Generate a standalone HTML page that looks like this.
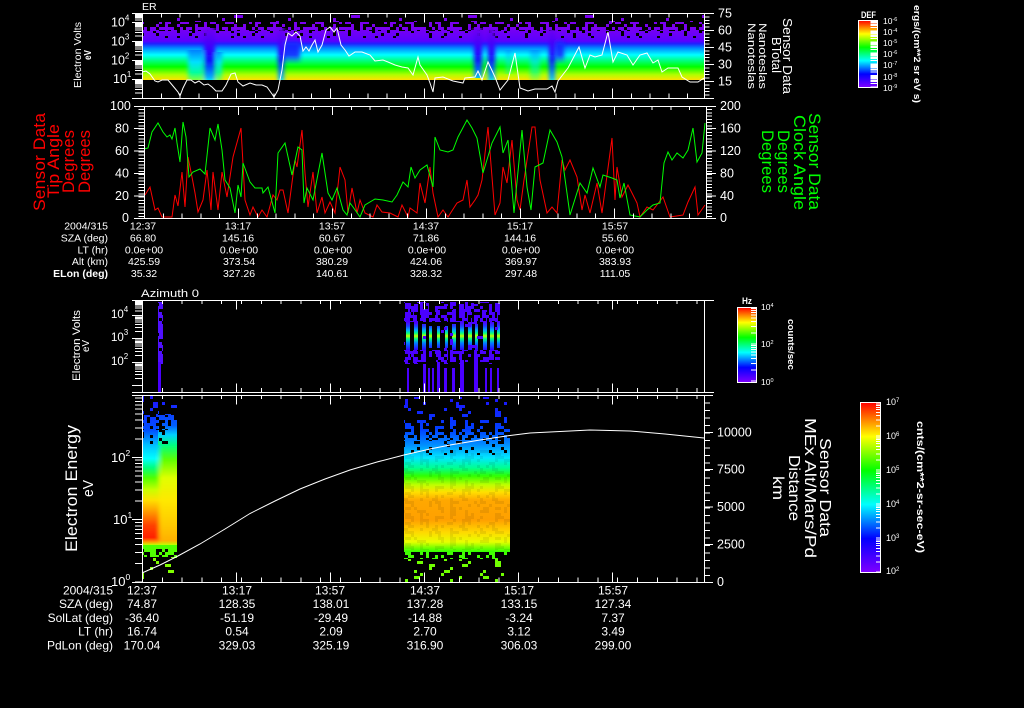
<!DOCTYPE html>
<html><head><meta charset="utf-8"><title>Sensor Data</title>
<style>
html,body{margin:0;padding:0;background:#000;width:1024px;height:708px;overflow:hidden}
svg{display:block;font-family:"Liberation Sans",sans-serif}
text{fill:#fff}
.c{shape-rendering:crispEdges}
</style></head><body>
<svg width="1024" height="708" viewBox="0 0 1024 708" xmlns="http://www.w3.org/2000/svg">
<defs>
<linearGradient id="rb" x1="0" y1="0" x2="0" y2="1">
<stop offset="0" stop-color="#f00"/><stop offset=".1" stop-color="#ff8000"/><stop offset=".2" stop-color="#ff0"/><stop offset=".4" stop-color="#0f0"/><stop offset=".6" stop-color="#0ff"/><stop offset=".8" stop-color="#00f"/><stop offset="1" stop-color="#8000ff"/>
</linearGradient>
<linearGradient id="g1" gradientUnits="userSpaceOnUse" x1="0" y1="14" x2="0" y2="80">
<stop offset="0" stop-color="#7a00f0"/><stop offset=".21" stop-color="#7a00f0"/><stop offset=".41" stop-color="#5a00ff"/><stop offset=".45" stop-color="#2020ff"/><stop offset=".515" stop-color="#0088ff"/><stop offset=".62" stop-color="#0ff"/><stop offset=".7" stop-color="#00ff88"/><stop offset=".8" stop-color="#0f0"/><stop offset=".92" stop-color="#b0ff00"/><stop offset="1" stop-color="#ffe000"/>
</linearGradient>
<linearGradient id="dipA" gradientUnits="userSpaceOnUse" x1="0" y1="28" x2="0" y2="80">
<stop offset="0" stop-color="#7000f0"/><stop offset=".45" stop-color="#3000ff"/><stop offset=".62" stop-color="#1010ff"/><stop offset=".8" stop-color="#0060ff"/><stop offset=".95" stop-color="#00b0ff"/><stop offset="1" stop-color="#00e0ff"/>
</linearGradient>
<linearGradient id="dipB" gradientUnits="userSpaceOnUse" x1="0" y1="50" x2="0" y2="80">
<stop offset="0" stop-color="#0080ff"/><stop offset=".4" stop-color="#00e0ff"/><stop offset=".75" stop-color="#00ffa0"/><stop offset="1" stop-color="#80ff40"/>
</linearGradient>
<linearGradient id="dipC" gradientUnits="userSpaceOnUse" x1="0" y1="38" x2="0" y2="64">
<stop offset="0" stop-color="#1828ff" stop-opacity="0"/><stop offset=".3" stop-color="#1828ff"/><stop offset=".65" stop-color="#1828ff" stop-opacity=".9"/><stop offset="1" stop-color="#1828ff" stop-opacity="0"/>
</linearGradient>
<linearGradient id="g3" gradientUnits="userSpaceOnUse" x1="0" y1="322" x2="0" y2="350">
<stop offset="0" stop-color="#5000ff"/><stop offset=".15" stop-color="#2040ff"/><stop offset=".3" stop-color="#00b0ff"/><stop offset=".4" stop-color="#00ff80"/><stop offset=".5" stop-color="#c0ff00"/><stop offset=".6" stop-color="#00ff80"/><stop offset=".75" stop-color="#0080ff"/><stop offset="1" stop-color="#3000ff"/>
</linearGradient>
<linearGradient id="g4" gradientUnits="userSpaceOnUse" x1="0" y1="395" x2="0" y2="552">
<stop offset="0" stop-color="#2010ff"/><stop offset=".22" stop-color="#0040ff"/><stop offset=".32" stop-color="#0090ff"/><stop offset=".4" stop-color="#00e8ff"/><stop offset=".465" stop-color="#00ff90"/><stop offset=".516" stop-color="#30ff00"/><stop offset=".573" stop-color="#c0ff00"/><stop offset=".618" stop-color="#ffe000"/><stop offset=".67" stop-color="#ffa800"/><stop offset=".796" stop-color="#ffa000"/><stop offset=".873" stop-color="#ffd800"/><stop offset=".936" stop-color="#e8ff00"/><stop offset=".975" stop-color="#70ff00"/><stop offset="1" stop-color="#30ff00"/>
</linearGradient>
<linearGradient id="g5" gradientUnits="userSpaceOnUse" x1="0" y1="396" x2="0" y2="545">
<stop offset="0" stop-color="#2010ff"/><stop offset=".23" stop-color="#0050ff"/><stop offset=".33" stop-color="#00c0ff"/><stop offset=".42" stop-color="#0ff"/><stop offset=".48" stop-color="#00ff80"/><stop offset=".55" stop-color="#50ff00"/><stop offset=".63" stop-color="#c8ff00"/><stop offset=".7" stop-color="#ffe000"/><stop offset=".77" stop-color="#ffa000"/><stop offset=".87" stop-color="#ff4000"/><stop offset=".95" stop-color="#ff2000"/><stop offset=".98" stop-color="#ffa000"/><stop offset="1" stop-color="#c0ff00"/>
</linearGradient>
<linearGradient id="g6" gradientUnits="userSpaceOnUse" x1="0" y1="396" x2="0" y2="545">
<stop offset="0" stop-color="#2010ff"/><stop offset=".2" stop-color="#0060ff"/><stop offset=".26" stop-color="#00d0ff"/><stop offset=".33" stop-color="#00ff80"/><stop offset=".43" stop-color="#60ff00"/><stop offset=".55" stop-color="#e0ff00"/><stop offset=".7" stop-color="#ffe800"/><stop offset=".87" stop-color="#ffc800"/><stop offset=".97" stop-color="#ffb000"/><stop offset="1" stop-color="#c0ff00"/>
</linearGradient>
<filter id="bl" filterUnits="userSpaceOnUse" x="130" y="20" width="590" height="70"><feGaussianBlur stdDeviation="2.2 0"/></filter>
<filter id="bl2" filterUnits="userSpaceOnUse" x="130" y="440" width="60" height="110"><feGaussianBlur stdDeviation="2 0"/></filter>
<clipPath id="cl4"><rect x="142" y="445" width="35" height="100"/></clipPath>
<clipPath id="cl1"><rect x="142" y="27" width="562" height="53"/></clipPath>
<pattern id="p6" patternUnits="userSpaceOnUse" width="1024" height="30">
<g stroke="#fff" stroke-width="3" class="c">
<path d="M0 1.5H1024" stroke-dasharray="3 57 6 81"/><path d="M0 4.5H1024" stroke-dasharray="3 78 3 66"/><path d="M0 7.5H1024" stroke-dasharray="6 99 3 51"/><path d="M0 10.5H1024" stroke-dasharray="3 72"/><path d="M0 13.5H1024" stroke-dasharray="3 45 3 90 3 57"/><path d="M0 16.5H1024" stroke-dasharray="9 108"/><path d="M0 19.5H1024" stroke-dasharray="3 63 3 42"/><path d="M0 22.5H1024" stroke-dasharray="3 54 6 75"/><path d="M0 25.5H1024" stroke-dasharray="6 87"/><path d="M0 28.5H1024" stroke-dasharray="3 111 3 48"/>
</g></pattern>
<pattern id="p15" patternUnits="userSpaceOnUse" width="1024" height="30">
<g stroke="#fff" stroke-width="3" class="c">
<path d="M0 1.5H1024" stroke-dasharray="3 27 6 33"/><path d="M0 4.5H1024" stroke-dasharray="3 18 3 36"/><path d="M0 7.5H1024" stroke-dasharray="6 39 3 21"/><path d="M0 10.5H1024" stroke-dasharray="3 42"/><path d="M0 13.5H1024" stroke-dasharray="3 15 3 30 3 27"/><path d="M0 16.5H1024" stroke-dasharray="9 48"/><path d="M0 19.5H1024" stroke-dasharray="3 33 3 12"/><path d="M0 22.5H1024" stroke-dasharray="3 24 6 45"/><path d="M0 25.5H1024" stroke-dasharray="6 27"/><path d="M0 28.5H1024" stroke-dasharray="3 51 3 18"/>
</g></pattern>
<pattern id="p35" patternUnits="userSpaceOnUse" width="1024" height="30">
<g stroke="#fff" stroke-width="3" class="c">
<path d="M0 1.5H1024" stroke-dasharray="3 6 6 9 3 12 9 15"/><path d="M0 4.5H1024" stroke-dasharray="6 9 3 3 3 21"/><path d="M0 7.5H1024" stroke-dasharray="3 12 9 6"/><path d="M0 10.5H1024" stroke-dasharray="9 6 3 15 3 6"/><path d="M0 13.5H1024" stroke-dasharray="3 3 3 18 6 9"/><path d="M0 16.5H1024" stroke-dasharray="6 12 3 6 3 3 3 15"/><path d="M0 19.5H1024" stroke-dasharray="3 9 6 12"/><path d="M0 22.5H1024" stroke-dasharray="9 15 3 3 6 9"/><path d="M0 25.5H1024" stroke-dasharray="3 6 3 9 3 15"/><path d="M0 28.5H1024" stroke-dasharray="6 3 3 21 6 6"/>
</g></pattern>
<pattern id="p60" patternUnits="userSpaceOnUse" width="1024" height="30">
<g stroke="#fff" stroke-width="3" class="c">
<path d="M0 1.5H1024" stroke-dasharray="9 6 3 3 6 3"/><path d="M0 4.5H1024" stroke-dasharray="6 3 12 6"/><path d="M0 7.5H1024" stroke-dasharray="3 3 9 3 6 6 12 3"/><path d="M0 10.5H1024" stroke-dasharray="12 6 3 3"/><path d="M0 13.5H1024" stroke-dasharray="6 3 3 3 9 6"/><path d="M0 16.5H1024" stroke-dasharray="9 3 6 6 3 3"/><path d="M0 19.5H1024" stroke-dasharray="3 6 12 3 6 3"/><path d="M0 22.5H1024" stroke-dasharray="12 3 3 6"/><path d="M0 25.5H1024" stroke-dasharray="6 6 9 3"/><path d="M0 28.5H1024" stroke-dasharray="3 3 6 3 15 6"/>
</g></pattern>
<pattern id="p85" patternUnits="userSpaceOnUse" width="1024" height="30">
<g stroke="#fff" stroke-width="3" class="c">
<path d="M0 1.5H1024" stroke-dasharray="21 3 12 3"/><path d="M0 4.5H1024" stroke-dasharray="12 3 30 3"/><path d="M0 7.5H1024" stroke-dasharray="33 3 9 3 15 3"/><path d="M0 10.5H1024" stroke-dasharray="27 6"/><path d="M0 13.5H1024" stroke-dasharray="18 3 24 3"/><path d="M0 16.5H1024" stroke-dasharray="39 3 6 3"/><path d="M0 19.5H1024" stroke-dasharray="15 3 33 3"/><path d="M0 22.5H1024" stroke-dasharray="24 3 9 6"/><path d="M0 25.5H1024" stroke-dasharray="42 3"/><path d="M0 28.5H1024" stroke-dasharray="9 3 27 3"/>
</g></pattern>
<mask id="m6" maskUnits="userSpaceOnUse" x="0" y="0" width="1024" height="708"><rect width="1024" height="708" fill="url(#p6)"/></mask>
<mask id="m15" maskUnits="userSpaceOnUse" x="0" y="0" width="1024" height="708"><rect width="1024" height="708" fill="url(#p15)"/></mask>
<mask id="m35" maskUnits="userSpaceOnUse" x="0" y="0" width="1024" height="708"><rect width="1024" height="708" fill="url(#p35)"/></mask>
<mask id="m60" maskUnits="userSpaceOnUse" x="0" y="0" width="1024" height="708"><rect width="1024" height="708" fill="url(#p60)"/></mask>
<mask id="m85" maskUnits="userSpaceOnUse" x="0" y="0" width="1024" height="708"><rect width="1024" height="708" fill="url(#p85)"/></mask>
<path id="dec" d="M-7 0H0M-7 -30.1H0M-7 -47.7H0M-7 -60.2H0M-7 -69.9H0M-7 -77.8H0M-7 -84.5H0M-7 -90.3H0M-7 -95.4H0" fill="none" stroke="#fff" vector-effect="non-scaling-stroke"/>
</defs>

<rect width="1024" height="708" fill="#000"/>

<!-- PANEL 1 spectrogram -->
<g class="c">
<rect x="142" y="15" width="562" height="7" fill="url(#g1)" mask="url(#m6)"/>
<rect x="142" y="22" width="562" height="5" fill="url(#g1)" mask="url(#m35)"/>
<rect x="142" y="27" width="562" height="4" fill="url(#g1)" mask="url(#m60)"/>
<rect x="142" y="31" width="562" height="7" fill="url(#g1)" mask="url(#m85)"/>
<rect x="142" y="38" width="562" height="42" fill="url(#g1)"/>
</g>
<g clip-path="url(#cl1)">
<g filter="url(#bl)">
<rect x="188" y="50" width="15" height="30" fill="url(#dipB)"/>
<rect x="216" y="52" width="6" height="28" fill="url(#dipB)"/>
<rect x="204" y="28" width="11" height="52" fill="url(#dipA)"/>
<rect x="278" y="28" width="6" height="52" fill="url(#dipA)"/>
<rect x="284" y="38" width="16" height="26" fill="url(#dipC)"/>
<rect x="474" y="28" width="8" height="50" fill="url(#dipA)"/>
<rect x="488" y="28" width="7" height="52" fill="url(#dipA)"/>
<rect x="530" y="50" width="10" height="30" fill="url(#dipB)" opacity=".6"/>
<rect x="549" y="30" width="6" height="50" fill="url(#dipA)"/>
<rect x="556" y="38" width="8" height="26" fill="url(#dipC)"/>
<rect x="506" y="50" width="5" height="24" fill="url(#dipB)" opacity=".5"/>
</g>
</g>

<!-- PANEL 1 white line -->
<polyline fill="none" stroke="#fff" stroke-width="1" points="142,72 146,71 150,74 155,81 158,82 162,80 168,80 173,86 178,92 180,96 183,88 187,80 191,80 195,83 199,81 204,85 208,84 212,87 216,91 222,91 226,85 231,74 235,73 238,82 243,86 250,83 256,85 262,85 267,87 272,94 274,97 278,90 282,70 285,45 288,33 292,36 296,32 300,36 303,51 306,47 309,51 312,45 315,40 318,52 322,45 326,30 330,27 334,32 337,28 341,45 345,50 349,56 355,52 362,52 370,55 375,61 383,60 388,62 395,65 402,67 408,68 413,75 418,57 420,65 427,75 430,83 433,92 435,78 443,77 453,81 463,83 465,78 475,77 478,71 482,80 488,62 495,77 500,90 508,80 515,53 520,88 528,91 535,89 547,89 552,86 555,92 558,81 568,68 579,47 585,68 590,55 595,57 602,55 608,32 613,62 618,52 627,55 633,65 640,55 647,53 653,63 658,60 662,72 668,68 678,68 682,77 690,82 698,82 704,78"/>

<!-- PANEL 1 frame -->
<g class="c" stroke="#fff" fill="none">
<path d="M132 13.5H714M132 98.5H714M142.5 13V98M704.5 13V98"/>
<path d="M142 15.5H704" stroke-width="4" stroke-dasharray="1 17.8"/>
<path d="M142 96H704" stroke-width="5" stroke-dasharray="1 17.8"/>
<path d="M142 18H704" stroke-width="9" stroke-dasharray="1 93"/>
<path d="M142 93.5H704" stroke-width="10" stroke-dasharray="1 93"/>
<path d="M707 13V98" stroke-width="5" stroke-dasharray="1 2.4"/>
<path d="M704 30.5H714M704 47.5H714M704 64.5H714M704 81.5H714"/>
<path d="M132 22.5H142M132 41.5H142M132 60.5H142M132 79.5H142"/>
<use href="#dec" transform="translate(142,22.5) scale(1,.09)"/>
<use href="#dec" transform="translate(142,41.5) scale(1,.19)"/>
<use href="#dec" transform="translate(142,60.5) scale(1,.19)"/>
<use href="#dec" transform="translate(142,79.5) scale(1,.19)"/>
<use href="#dec" transform="translate(142,98.5) scale(1,.19)"/>
</g>
<text x="142" y="10" font-size="10.5">ER</text>
<g font-size="12.5">
<text x="111" y="26.5">10<tspan dy="-6" font-size="8">4</tspan></text>
<text x="111" y="45.5">10<tspan dy="-6" font-size="8">3</tspan></text>
<text x="111" y="64.5">10<tspan dy="-6" font-size="8">2</tspan></text>
<text x="113" y="83">10<tspan dy="-6" font-size="8">1</tspan></text>
</g>
<g font-size="12.5">
<text x="718" y="17.5">75</text><text x="718" y="34.5">60</text><text x="718" y="51.5">45</text><text x="718" y="68.5">30</text><text x="718" y="85.5">15</text>
</g>
<text transform="translate(81,88) rotate(-90)" font-size="10.5" textLength="66" lengthAdjust="spacingAndGlyphs">Electron Volts</text>
<text transform="translate(91,60) rotate(-90)" font-size="10" font-weight="bold" textLength="10" lengthAdjust="spacingAndGlyphs">eV</text>
<text transform="translate(783,18) rotate(90)" font-size="13" textLength="76" lengthAdjust="spacingAndGlyphs">Sensor Data</text>
<text transform="translate(772,37) rotate(90)" font-size="13" textLength="36" lengthAdjust="spacingAndGlyphs">BTotal</text>
<text transform="translate(759,23) rotate(90)" font-size="11" textLength="66" lengthAdjust="spacingAndGlyphs">Nanoteslas</text>
<text transform="translate(748,23) rotate(90)" font-size="11" textLength="66" lengthAdjust="spacingAndGlyphs">Nanoteslas</text>

<!-- Colorbar 1 -->
<rect x="858.5" y="20.5" width="19" height="67" fill="url(#rb)" stroke="#fff" class="c"/>
<g class="c">
<use href="#dec" transform="translate(877,31) scale(.9,.111)" stroke-width="1"/>
<use href="#dec" transform="translate(877,42) scale(.9,.111)"/>
<use href="#dec" transform="translate(877,53) scale(.9,.111)"/>
<use href="#dec" transform="translate(877,64) scale(.9,.111)"/>
<use href="#dec" transform="translate(877,75.5) scale(.9,.111)"/>
<use href="#dec" transform="translate(877,87) scale(.9,.111)"/>
</g>
<text x="861" y="18" font-size="9.5" font-weight="bold" textLength="15" lengthAdjust="spacingAndGlyphs">DEF</text>
<g font-size="8.5">
<text x="883" y="24">10<tspan dy="-3" font-size="5.5">-6</tspan></text>
<text x="883" y="35">10<tspan dy="-3" font-size="5.5">-4</tspan></text>
<text x="883" y="46">10<tspan dy="-3" font-size="5.5">-5</tspan></text>
<text x="883" y="57">10<tspan dy="-3" font-size="5.5">-6</tspan></text>
<text x="883" y="68">10<tspan dy="-3" font-size="5.5">-7</tspan></text>
<text x="883" y="80">10<tspan dy="-3" font-size="5.5">-8</tspan></text>
<text x="883" y="91">10<tspan dy="-3" font-size="5.5">-9</tspan></text>
</g>
<text transform="translate(914,5) rotate(90)" font-size="9.5" font-weight="bold" textLength="98" lengthAdjust="spacingAndGlyphs">ergs/(cm**2 sr eV s)</text>

<!-- PANEL 2 lines -->
<polyline fill="none" stroke="#f00" stroke-width="1" points="145,195 150,187 155,210 158,208 162,217 172,217 175,195 178,206 182,172 185,207 188,157 192,177 195,193 198,212 203,200 207,170 211,210 213,172 218,210 222,172 227,197 233,157 241,128 245,200 250,215 253,207 258,217 262,210 267,217 273,195 277,200 280,190 283,190 288,213 295,160 297,167 302,130 305,173 308,207 313,172 317,213 322,197 325,213 330,202 335,213 340,167 345,180 348,213 352,188 357,213 360,200 365,213 373,217 377,205 382,212 390,213 398,217 402,205 408,217 410,208 417,213 420,183 425,203 430,167 433,193 438,217 443,210 448,217 457,203 463,200 467,180 470,207 475,200 478,195 482,180 488,127 492,177 495,215 500,203 503,167 507,183 512,140 517,200 520,210 524,180 532,127 535,127 540,180 547,213 552,207 557,213 562,160 565,170 570,160 577,177 582,210 585,195 590,213 597,183 602,213 612,138 615,200 617,167 622,197 628,185 637,203 640,217 647,207 653,210 663,197 670,217 683,215 688,202 695,187 698,215 705,205"/>
<polyline fill="none" stroke="#0f0" stroke-width="1" points="144,149 148,148 152,132 158,123 163,132 167,137 170,135 172,139 175,128 177,143 180,162 183,122 186,137 189,177 193,172 200,169 205,174 210,128 215,140 218,124 222,150 225,180 230,188 235,213 238,185 241,197 243,163 250,182 255,188 262,188 263,193 268,187 275,213 278,153 285,143 292,175 298,147 302,150 304,203 307,188 313,200 322,153 328,193 332,200 337,188 343,210 347,215 350,203 353,207 360,217 365,205 375,199 383,200 392,202 397,195 403,182 408,187 411,167 415,178 420,170 427,165 433,187 435,137 440,150 448,152 453,150 458,137 467,120 472,128 477,138 483,173 492,143 500,127 503,153 508,140 514,213 522,130 527,187 531,210 535,167 543,163 550,130 557,142 562,157 570,215 580,183 587,193 593,168 600,187 603,175 612,178 617,180 620,198 624,183 630,215 640,217 647,210 653,205 660,203 664,163 668,152 672,160 677,153 683,158 688,150 693,128 697,162 702,153 705,123"/>

<!-- PANEL 2 frame -->
<g class="c" stroke="#fff" fill="none">
<path d="M134 106.5H716M134 218.5H716M144.5 106V218M706.5 106V218"/>
<path d="M144 108H706" stroke-width="4" stroke-dasharray="1 17.8"/>
<path d="M144 216H706" stroke-width="5" stroke-dasharray="1 17.8"/>
<path d="M144 110.5H706" stroke-width="9" stroke-dasharray="1 93"/>
<path d="M144 213.5H706" stroke-width="10" stroke-dasharray="1 93"/>
<path d="M141.5 106V218" stroke-width="6" stroke-dasharray="1 2.24"/>
<path d="M709 106V218" stroke-width="6" stroke-dasharray="1 2.24"/>
<path d="M134 128.5H144M134 151H144M134 173.5H144M134 196H144M706 128.5H716M706 151H716M706 173.5H716M706 196H716"/>
</g>
<g font-size="12.5">
<text x="110" y="110">100</text><text x="115" y="132.5">80</text><text x="115" y="155">60</text><text x="115" y="177.5">40</text><text x="115" y="200">20</text><text x="122" y="222">0</text>
<text x="720" y="110">200</text><text x="720" y="132.5">160</text><text x="720" y="155">120</text><text x="720" y="177.5">80</text><text x="720" y="200">40</text><text x="720" y="222">0</text>
</g>
<g font-size="17">
<text style="fill:#f00" transform="translate(45,211) rotate(-90)" textLength="98" lengthAdjust="spacingAndGlyphs">Sensor Data</text>
<text style="fill:#f00" transform="translate(59,198) rotate(-90)" textLength="74" lengthAdjust="spacingAndGlyphs">Tip Angle</text>
<text style="fill:#f00" transform="translate(74,193) rotate(-90)" textLength="63" lengthAdjust="spacingAndGlyphs">Degrees</text>
<text style="fill:#f00" transform="translate(90,193) rotate(-90)" textLength="63" lengthAdjust="spacingAndGlyphs">Degrees</text>
<text style="fill:#0f0" transform="translate(809,113) rotate(90)" textLength="97" lengthAdjust="spacingAndGlyphs">Sensor Data</text>
<text style="fill:#0f0" transform="translate(794,115) rotate(90)" textLength="95" lengthAdjust="spacingAndGlyphs">Clock Angle</text>
<text style="fill:#0f0" transform="translate(778,130) rotate(90)" textLength="63" lengthAdjust="spacingAndGlyphs">Degrees</text>
<text style="fill:#0f0" transform="translate(762,130) rotate(90)" textLength="63" lengthAdjust="spacingAndGlyphs">Degrees</text>
</g>

<!-- Table 1 -->
<g font-size="10.5" text-anchor="end">
<text x="108" y="229.5">2004/315</text><text x="108" y="241.5">SZA (deg)</text><text x="108" y="253.5">LT (hr)</text><text x="108" y="265">Alt (km)</text><text x="108" y="277" font-weight="bold">ELon (deg)</text>
</g>
<g font-size="10.5" text-anchor="middle">
<text x="143" y="229.5">12:37</text><text x="238" y="229.5">13:17</text><text x="332" y="229.5">13:57</text><text x="426" y="229.5">14:37</text><text x="520" y="229.5">15:17</text><text x="615" y="229.5">15:57</text>
<text x="143" y="241.5">66.80</text><text x="238" y="241.5">145.16</text><text x="332" y="241.5">60.67</text><text x="426" y="241.5">71.86</text><text x="520" y="241.5">144.16</text><text x="615" y="241.5">55.60</text>
<text x="144" y="253.5">0.0e+00</text><text x="239" y="253.5">0.0e+00</text><text x="333" y="253.5">0.0e+00</text><text x="427" y="253.5">0.0e+00</text><text x="521" y="253.5">0.0e+00</text><text x="615" y="253.5">0.0e+00</text>
<text x="144" y="265">425.59</text><text x="239" y="265">373.54</text><text x="332" y="265">380.29</text><text x="426" y="265">424.06</text><text x="521" y="265">369.97</text><text x="615" y="265">383.93</text>
<text x="144" y="277">35.32</text><text x="239" y="277">327.26</text><text x="332" y="277">140.61</text><text x="426" y="277">328.32</text><text x="521" y="277">297.48</text><text x="615" y="277">111.05</text>
</g>

<!-- PANEL 3 -->
<g class="c">
<rect x="158" y="302" width="5" height="62" fill="#5010ff" mask="url(#m85)"/>
<rect x="158" y="362" width="3" height="30" fill="#4a00ff"/>
<rect x="404" y="302" width="96" height="60" fill="#4a00ff" mask="url(#m35)"/>
<g fill="#4a00ff" mask="url(#m60)">
<rect x="405" y="306" width="5" height="16"/><rect x="413" y="304" width="5" height="18"/><rect x="421" y="310" width="5" height="12"/><rect x="428" y="306" width="4" height="16"/><rect x="436" y="310" width="4" height="12"/><rect x="444" y="304" width="4" height="18"/><rect x="452" y="310" width="4" height="12"/><rect x="459" y="304" width="5" height="18"/><rect x="467" y="308" width="5" height="14"/><rect x="474" y="304" width="4" height="18"/><rect x="482" y="310" width="5" height="12"/><rect x="489" y="304" width="5" height="18"/><rect x="497" y="308" width="3" height="14"/>
<rect x="405" y="350" width="5" height="14"/><rect x="413" y="350" width="5" height="14"/><rect x="421" y="350" width="5" height="12"/><rect x="436" y="350" width="4" height="12"/><rect x="444" y="350" width="4" height="14"/><rect x="459" y="350" width="5" height="14"/><rect x="474" y="350" width="4" height="12"/><rect x="489" y="350" width="5" height="14"/>
</g>
<rect x="404" y="322" width="96" height="28" fill="#000"/>
<rect x="406" y="322" width="4" height="28" fill="url(#g3)"/><rect x="414" y="322" width="4" height="28" fill="url(#g3)"/><rect x="422" y="324" width="4" height="26" fill="url(#g3)"/><rect x="429" y="326" width="3" height="22" fill="url(#g3)"/><rect x="437" y="326" width="3" height="22" fill="url(#g3)"/><rect x="445" y="326" width="3" height="22" fill="url(#g3)"/><rect x="452" y="324" width="4" height="26" fill="url(#g3)"/><rect x="460" y="322" width="4" height="28" fill="url(#g3)"/><rect x="468" y="322" width="4" height="28" fill="url(#g3)"/><rect x="475" y="324" width="3" height="26" fill="url(#g3)"/><rect x="483" y="322" width="4" height="28" fill="url(#g3)"/><rect x="490" y="322" width="4" height="28" fill="url(#g3)"/><rect x="497" y="322" width="3" height="26" fill="url(#g3)"/>
<rect x="404" y="322" width="96" height="28" fill="#4a00ff" mask="url(#m6)"/>
<g fill="#4a00ff">
<rect x="407" y="368" width="2" height="24"/><rect x="423" y="364" width="3" height="28"/><rect x="428" y="368" width="2" height="24"/><rect x="432" y="368" width="2" height="24"/><rect x="437" y="362" width="3" height="30"/><rect x="444" y="368" width="3" height="24"/><rect x="452" y="368" width="3" height="24"/><rect x="460" y="360" width="4" height="32"/><rect x="474" y="360" width="4" height="32"/><rect x="485" y="368" width="2" height="24"/><rect x="490" y="368" width="2" height="24"/><rect x="497" y="368" width="2" height="24"/>
</g>
</g>
<g class="c" stroke="#fff" fill="none">
<path d="M132 300.5H714M132 392.5H714M142.5 300V392M704.5 300V392"/>
<path d="M142 302H704" stroke-width="4" stroke-dasharray="1 18.8"/>
<path d="M142 390H704" stroke-width="4" stroke-dasharray="1 18.8"/>
<path d="M142 305H704" stroke-width="9" stroke-dasharray="1 93"/>
<path d="M142 388H704" stroke-width="9" stroke-dasharray="1 93"/>
<path d="M132 315.5H142M132 338.5H142M132 362.5H142M132 385.5H142"/>
<use href="#dec" transform="translate(142,315.5) scale(1,.155)"/>
<use href="#dec" transform="translate(142,338.5) scale(1,.235)"/>
<use href="#dec" transform="translate(142,362.5) scale(1,.235)"/>
<use href="#dec" transform="translate(142,385.5) scale(1,.235)"/>
</g>
<text x="141" y="297" font-size="11" textLength="58" lengthAdjust="spacingAndGlyphs">Azimuth 0</text>
<g font-size="11.5">
<text x="111" y="318">10<tspan dy="-6" font-size="8">4</tspan></text>
<text x="111" y="341">10<tspan dy="-6" font-size="8">3</tspan></text>
<text x="111" y="365">10<tspan dy="-6" font-size="8">2</tspan></text>
</g>
<text transform="translate(80,381) rotate(-90)" font-size="11" textLength="71" lengthAdjust="spacingAndGlyphs">Electron Volts</text>
<text transform="translate(89,352) rotate(-90)" font-size="10" textLength="12" lengthAdjust="spacingAndGlyphs">eV</text>

<!-- Colorbar 3 -->
<rect x="737.5" y="307.5" width="19" height="75" fill="url(#rb)" stroke="#fff" class="c"/>
<g class="c">
<use href="#dec" transform="translate(756,344) scale(.7,.37)"/>
<use href="#dec" transform="translate(756,381) scale(.7,.37)"/>
</g>
<text x="742" y="304" font-size="9.5" font-weight="bold" textLength="10" lengthAdjust="spacingAndGlyphs">Hz</text>
<g font-size="8.5">
<text x="761" y="310">10<tspan dy="-3" font-size="5.5">4</tspan></text>
<text x="761" y="347">10<tspan dy="-3" font-size="5.5">2</tspan></text>
<text x="761" y="385">10<tspan dy="-3" font-size="5.5">0</tspan></text>
</g>
<text transform="translate(788,319) rotate(90)" font-size="9.5" font-weight="bold" textLength="51" lengthAdjust="spacingAndGlyphs">counts/sec</text>

<!-- PANEL 4 spectrogram -->
<g class="c">
<rect x="142" y="396" width="16" height="19" fill="url(#g5)" mask="url(#m35)"/>
<rect x="158" y="396" width="19" height="19" fill="url(#g6)" mask="url(#m15)"/>
<rect x="142" y="415" width="16" height="15" fill="url(#g5)" mask="url(#m60)"/>
<rect x="158" y="415" width="19" height="15" fill="url(#g6)" mask="url(#m60)"/>
<rect x="142" y="430" width="16" height="15" fill="url(#g5)" mask="url(#m85)"/>
<rect x="158" y="430" width="19" height="15" fill="url(#g6)" mask="url(#m85)"/>
<rect x="142" y="545" width="35" height="4" fill="#50ff00"/>
<rect x="142" y="549" width="35" height="8" fill="#50ff00" mask="url(#m60)"/>
<rect x="142" y="557" width="35" height="25" fill="#80ff00" mask="url(#m15)"/>
<rect x="404" y="397" width="106" height="23" fill="url(#g4)" mask="url(#m15)"/>
<rect x="404" y="420" width="106" height="12" fill="url(#g4)" mask="url(#m35)"/>
<rect x="404" y="432" width="106" height="8" fill="url(#g4)" mask="url(#m60)"/>
<rect x="404" y="440" width="106" height="15" fill="url(#g4)" mask="url(#m85)"/>
<rect x="404" y="455" width="106" height="97" fill="url(#g4)"/>
<rect x="404" y="450" width="106" height="100" fill="#000" opacity=".07" mask="url(#m35)"/>
<rect x="404" y="552" width="106" height="7" fill="#40ff00" mask="url(#m35)"/>
<rect x="404" y="559" width="100" height="23" fill="#70ff00" mask="url(#m15)"/>
</g>
<g clip-path="url(#cl4)"><g filter="url(#bl2)">
<rect x="134" y="445" width="25" height="100" fill="url(#g5)"/>
<rect x="159" y="445" width="26" height="100" fill="url(#g6)"/>
</g></g>
<polyline fill="none" stroke="#fff" stroke-width="1" points="142,573 160,565 177,556.5 200,544 225,529 250,513.5 275,501 300,489 325,479 350,470 377,462 404,455 430,449 450,445 480,440 510,435.5 530,433 550,432 590,430 630,431 665,434 704,438"/>

<!-- PANEL 4 frame -->
<g class="c" stroke="#fff" fill="none">
<path d="M132 395.5H713M132 582.5H713M142.5 395V582M704.5 395V582"/>
<path d="M142 397H704" stroke-width="4" stroke-dasharray="1 18.8"/>
<path d="M142 580H704" stroke-width="5" stroke-dasharray="1 18.8"/>
<path d="M142 400H704" stroke-width="9" stroke-dasharray="1 93"/>
<path d="M142 577.5H704" stroke-width="10" stroke-dasharray="1 93"/>
<path d="M707 395V582" stroke-width="6" stroke-dasharray="1 6.5"/>
<path d="M704 432.5H713M704 469.5H713M704 507H713M704 544.5H713"/>
<path d="M132 457.5H142M132 519.5H142"/>
<use href="#dec" transform="translate(142,457.5) scale(1,.622)"/>
<use href="#dec" transform="translate(142,519.5) scale(1,.622)"/>
<use href="#dec" transform="translate(142,582) scale(1,.622)"/>
</g>
<g font-size="13">
<text x="111" y="462">10<tspan dy="-6" font-size="8.5">2</tspan></text>
<text x="113" y="524">10<tspan dy="-6" font-size="8.5">1</tspan></text>
<text x="111" y="586">10<tspan dy="-6" font-size="8.5">0</tspan></text>
</g>
<g font-size="12.5">
<text x="717" y="436.5">10000</text><text x="717" y="473.5">7500</text><text x="717" y="511">5000</text><text x="717" y="548.5">2500</text><text x="717" y="586">0</text>
</g>
<text transform="translate(77,552) rotate(-90)" font-size="17" textLength="127" lengthAdjust="spacingAndGlyphs">Electron Energy</text>
<text transform="translate(93,497) rotate(-90)" font-size="15" textLength="17" lengthAdjust="spacingAndGlyphs">eV</text>
<g font-size="16">
<text transform="translate(820,438) rotate(90)" textLength="99" lengthAdjust="spacingAndGlyphs">Sensor Data</text>
<text transform="translate(805,418) rotate(90)" textLength="140" lengthAdjust="spacingAndGlyphs">MEx Alt/Mars/Pd</text>
<text transform="translate(789,455) rotate(90)" textLength="66" lengthAdjust="spacingAndGlyphs">Distance</text>
<text transform="translate(773,476) rotate(90)" textLength="24" lengthAdjust="spacingAndGlyphs">km</text>
</g>

<!-- Colorbar 4 -->
<rect x="860.5" y="402.5" width="20" height="170" fill="url(#rb)" stroke="#fff" class="c"/>
<g class="c">
<use href="#dec" transform="translate(880,436) scale(.6,.338)"/>
<use href="#dec" transform="translate(880,470) scale(.6,.338)"/>
<use href="#dec" transform="translate(880,504) scale(.6,.338)"/>
<use href="#dec" transform="translate(880,538) scale(.6,.338)"/>
<use href="#dec" transform="translate(880,572) scale(.6,.338)"/>
</g>
<g font-size="9">
<text x="886" y="405">10<tspan dy="-3" font-size="6">7</tspan></text>
<text x="886" y="439">10<tspan dy="-3" font-size="6">6</tspan></text>
<text x="886" y="473">10<tspan dy="-3" font-size="6">5</tspan></text>
<text x="886" y="507">10<tspan dy="-3" font-size="6">4</tspan></text>
<text x="886" y="541">10<tspan dy="-3" font-size="6">3</tspan></text>
<text x="886" y="574">10<tspan dy="-3" font-size="6">2</tspan></text>
</g>
<text transform="translate(917,421) rotate(90)" font-size="10" font-weight="bold" textLength="132" lengthAdjust="spacingAndGlyphs">cnts/(cm**2-sr-sec-eV)</text>

<!-- Table 2 -->
<g font-size="12" text-anchor="end">
<text x="113" y="594.5">2004/315</text><text x="113" y="608">SZA (deg)</text><text x="113" y="622">SolLat (deg)</text><text x="113" y="635.5">LT (hr)</text><text x="113" y="649.5">PdLon (deg)</text>
</g>
<g font-size="12" text-anchor="middle">
<text x="142" y="594.5">12:37</text><text x="237" y="594.5">13:17</text><text x="330" y="594.5">13:57</text><text x="425" y="594.5">14:37</text><text x="519" y="594.5">15:17</text><text x="613" y="594.5">15:57</text>
<text x="142" y="608">74.87</text><text x="237" y="608">128.35</text><text x="331" y="608">138.01</text><text x="425" y="608">137.28</text><text x="519" y="608">133.15</text><text x="613" y="608">127.34</text>
<text x="142" y="622">-36.40</text><text x="237" y="622">-51.19</text><text x="331" y="622">-29.49</text><text x="425" y="622">-14.88</text><text x="519" y="622">-3.24</text><text x="613" y="622">7.37</text>
<text x="142" y="635.5">16.74</text><text x="237" y="635.5">0.54</text><text x="331" y="635.5">2.09</text><text x="425" y="635.5">2.70</text><text x="519" y="635.5">3.12</text><text x="613" y="635.5">3.49</text>
<text x="142" y="649.5">170.04</text><text x="237" y="649.5">329.03</text><text x="331" y="649.5">325.19</text><text x="425" y="649.5">316.90</text><text x="519" y="649.5">306.03</text><text x="613" y="649.5">299.00</text>
</g>
</svg>
</body></html>
